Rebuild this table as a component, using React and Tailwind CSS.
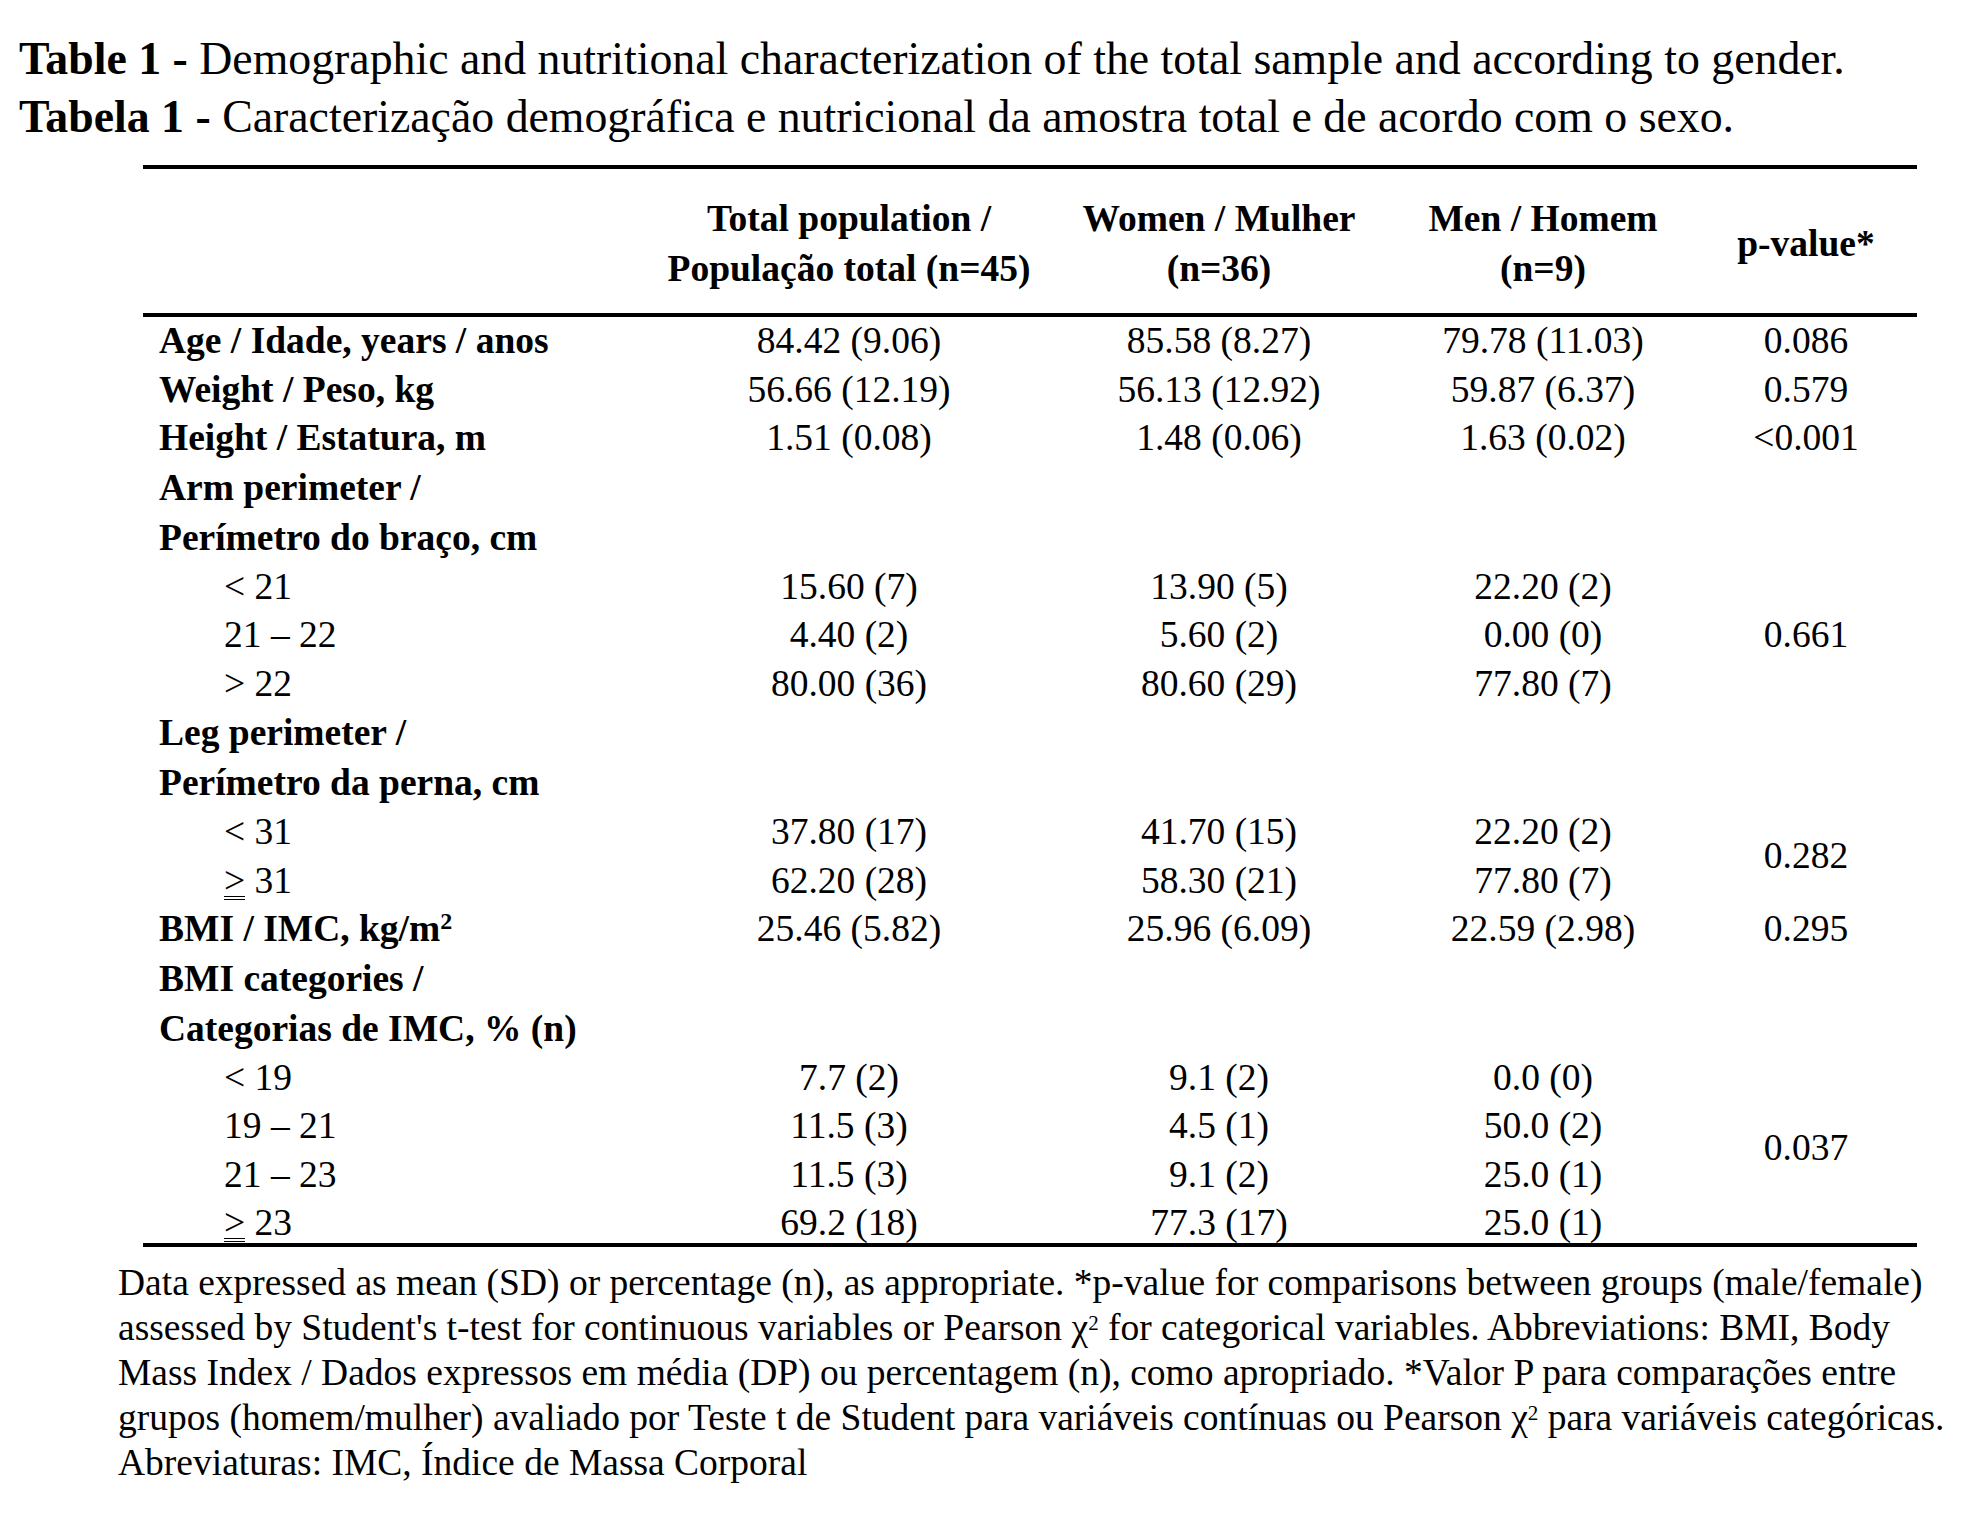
import React from "react";

const Ge = ({ n }) => (
  <span>
    <span className="inline-block leading-[30px] border-b-[4px] border-double border-black">&gt;</span> {n}
  </span>
);

const rows = [
  { label: "Age / Idade, years / anos", v: ["84.42 (9.06)", "85.58 (8.27)", "79.78 (11.03)"], p: "0.086", span: 1 },
  { label: "Weight / Peso, kg", v: ["56.66 (12.19)", "56.13 (12.92)", "59.87 (6.37)"], p: "0.579", span: 1 },
  { label: "Height / Estatura, m", v: ["1.51 (0.08)", "1.48 (0.06)", "1.63 (0.02)"], p: "<0.001", span: 1 },
  { two: ["Arm perimeter /", "Perímetro do braço, cm"] },
  { sub: "< 21", v: ["15.60 (7)", "13.90 (5)", "22.20 (2)"], p: "0.661", span: 3 },
  { sub: "21 – 22", v: ["4.40 (2)", "5.60 (2)", "0.00 (0)"] },
  { sub: "> 22", v: ["80.00 (36)", "80.60 (29)", "77.80 (7)"] },
  { two: ["Leg perimeter /", "Perímetro da perna, cm"] },
  { sub: "< 31", v: ["37.80 (17)", "41.70 (15)", "22.20 (2)"], p: "0.282", span: 2 },
  { sub: <Ge n="31" />, v: ["62.20 (28)", "58.30 (21)", "77.80 (7)"] },
  {
    label: (
      <span>
        BMI / IMC, kg/m<sup className="text-[24px]">2</sup>
      </span>
    ),
    v: ["25.46 (5.82)", "25.96 (6.09)", "22.59 (2.98)"],
    p: "0.295",
    span: 1,
  },
  { two: ["BMI categories /", "Categorias de IMC, % (n)"] },
  { sub: "< 19", v: ["7.7 (2)", "9.1 (2)", "0.0 (0)"], p: "0.037", span: 4 },
  { sub: "19 – 21", v: ["11.5 (3)", "4.5 (1)", "50.0 (2)"] },
  { sub: "21 – 23", v: ["11.5 (3)", "9.1 (2)", "25.0 (1)"] },
  { sub: <Ge n="23" />, v: ["69.2 (18)", "77.3 (17)", "25.0 (1)"], last: true },
];

const spanClass = {
  1: "row-span-1",
  2: "row-span-2",
  3: "row-span-3",
  4: "row-span-4",
};

export default function App() {
  const cells = [];
  rows.forEach((r, i) => {
    const h = r.last ? "h-[44px]" : "h-[48.5px]";
    if (r.two) {
      cells.push(
        <div key={`t${i}`} className="col-span-5 pl-[16px] font-bold leading-[50px] whitespace-nowrap">
          <div>{r.two[0]}</div>
          <div>{r.two[1]}</div>
        </div>
      );
      return;
    }
    cells.push(
      <div
        key={`l${i}`}
        className={
          r.label
            ? `col-start-1 ${h} leading-[48.5px] pl-[16px] font-bold whitespace-nowrap`
            : `col-start-1 ${h} leading-[48.5px] pl-[81px] whitespace-nowrap`
        }
      >
        {r.label || r.sub}
      </div>
    );
    r.v.forEach((val, j) => {
      cells.push(
        <div key={`v${i}-${j}`} className={`${h} leading-[48.5px] text-center whitespace-nowrap`}>
          {val}
        </div>
      );
    });
    if (r.p) {
      cells.push(
        <div
          key={`p${i}`}
          className={`col-start-5 ${spanClass[r.span]} flex items-center justify-center leading-[48.5px]`}
        >
          {r.p}
        </div>
      );
    }
  });

  return (
    <div
      className="w-[1981px] min-h-[1516px] bg-white text-black"
      style={{ fontFamily: '"Liberation Serif", "Times New Roman", serif' }}
    >
      <div className="pl-[19px] pt-[30px] text-[45.8px] leading-[58px] whitespace-nowrap">
        <div>
          <span className="font-bold">Table 1 -</span> Demographic and nutritional characterization of the total sample and according to gender.
        </div>
        <div>
          <span className="font-bold">Tabela 1 -</span> Caracterização demográfica e nutricional da amostra total e de acordo com o sexo.
        </div>
      </div>

      <div className="ml-[143px] mt-[19px] w-[1774px] text-[37.5px]">
        <div className="h-[4px] bg-black" />
        <div className="grid grid-cols-[508px_396px_344px_304px_222px] h-[144px] pt-[6px] font-bold leading-[50px] items-center">
          <div />
          <div className="text-center whitespace-nowrap">
            <div>Total population /</div>
            <div>População total (n=45)</div>
          </div>
          <div className="text-center whitespace-nowrap">
            <div>Women / Mulher</div>
            <div>(n=36)</div>
          </div>
          <div className="text-center whitespace-nowrap">
            <div>Men / Homem</div>
            <div>(n=9)</div>
          </div>
          <div className="text-center whitespace-nowrap">p-value*</div>
        </div>
        <div className="h-[4px] bg-black" />
        <div className="grid grid-cols-[508px_396px_344px_304px_222px]">{cells}</div>
        <div className="h-[4px] bg-black" />
      </div>

      <div className="ml-[118px] mt-[13px] text-[37.5px] leading-[45px] whitespace-nowrap">
        <div>Data expressed as mean (SD) or percentage (n), as appropriate. *p-value for comparisons between groups (male/female)</div>
        <div>
          assessed by Student's t-test for continuous variables or Pearson χ<sup className="text-[21px]">2</sup> for categorical variables. Abbreviations: BMI, Body
        </div>
        <div>Mass Index / Dados expressos em média (DP) ou percentagem (n), como apropriado. *Valor P para comparações entre</div>
        <div>
          grupos (homem/mulher) avaliado por Teste t de Student para variáveis contínuas ou Pearson χ<sup className="text-[21px]">2</sup> para variáveis categóricas.
        </div>
        <div>Abreviaturas: IMC, Índice de Massa Corporal</div>
      </div>
    </div>
  );
}
